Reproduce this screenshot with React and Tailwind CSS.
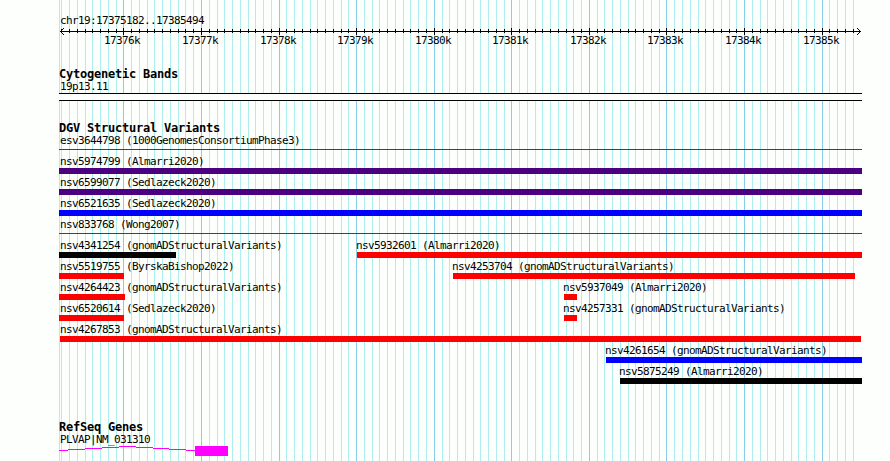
import clsx from "clsx";

const START = 17375182;
const END = 17385494;
const LEFT = 59;
const BASES_PER_MAJOR = 1000;
const BASES_PER_MINOR = 100;

const ROWS = [
  [{ id: "esv3644798", study: "1000GenomesConsortiumPhase3", from: 59, to: 862, type: "complex" }],
  [{ id: "nsv5974799", study: "Almarri2020", from: 59, to: 862, type: "inversion" }],
  [{ id: "nsv6599077", study: "Sedlazeck2020", from: 59, to: 862, type: "inversion" }],
  [{ id: "nsv6521635", study: "Sedlazeck2020", from: 59, to: 862, type: "gain" }],
  [{ id: "nsv833768", study: "Wong2007", from: 59, to: 862, type: "complex" }],
  [
    { id: "nsv4341254", study: "gnomADStructuralVariants", from: 59, to: 176, type: "other" },
    { id: "nsv5932601", study: "Almarri2020", from: 357, to: 862, type: "loss" },
  ],
  [
    { id: "nsv5519755", study: "ByrskaBishop2022", from: 59, to: 124, type: "loss" },
    { id: "nsv4253704", study: "gnomADStructuralVariants", from: 453, to: 855, type: "loss" },
  ],
  [
    { id: "nsv4264423", study: "gnomADStructuralVariants", from: 59, to: 125, type: "loss" },
    { id: "nsv5937049", study: "Almarri2020", from: 564, to: 577, type: "loss" },
  ],
  [
    { id: "nsv6520614", study: "Sedlazeck2020", from: 59, to: 124, type: "loss" },
    { id: "nsv4257331", study: "gnomADStructuralVariants", from: 564, to: 577, type: "loss" },
  ],
  [{ id: "nsv4267853", study: "gnomADStructuralVariants", from: 60, to: 861, type: "loss" }],
  [{ id: "nsv4261654", study: "gnomADStructuralVariants", from: 606, to: 862, type: "gain" }],
  [{ id: "nsv5875249", study: "Almarri2020", from: 620, to: 862, type: "other" }],
];

const BAR_STYLES = {
  complex: "mt-[2px] h-px bg-[#e00000]",
  inversion: "h-[6px] bg-[#4b0082]",
  gain: "h-[6px] bg-[#0000ff]",
  loss: "h-[6px] bg-[#ff0000]",
  other: "h-[6px] bg-black",
};

function toX(base) {
  return Math.round(59.97 + ((base - START) * 800) / (END - START));
}

const ticks = [];
for (
  let base = Math.ceil(START / BASES_PER_MINOR) * BASES_PER_MINOR;
  base <= END;
  base += BASES_PER_MINOR
) {
  ticks.push({ base, x: toX(base), major: base % BASES_PER_MAJOR === 0 });
}

export default function App() {
  return (
    <div className="relative h-[461px] w-[890px] overflow-hidden bg-[#fdfffc] font-['DejaVu_Sans_Mono',monospace] text-black">
      <GridLines />
      <div className="relative flex flex-col">
        <Ruler />
        <CytogeneticTrack />
        <VariantTrack />
        <GeneTrack />
      </div>
    </div>
  );
}

function GridLines() {
  return (
    <svg className="absolute inset-0" width="890" height="461" shapeRendering="crispEdges">
      <rect x={LEFT} y="0" width="1" height="461" fill="#afeeee" />
      {ticks.map(({ base, x, major }) => (
        <rect key={base} x={x} y="0" width="1" height="461" fill={major ? "#87ceeb" : "#afeeee"} />
      ))}
    </svg>
  );
}

function Ruler() {
  return (
    <div className="h-[67px] pt-[15px]">
      <Label className="ml-[60px]">
        chr19:{START}..{END}
      </Label>
      <svg width="890" height="24" className="block" shapeRendering="crispEdges">
        <rect x="60" y="4" width="801" height="1" />
        <path d="M60 4h1v1h-1zM61 3h1v3h-1zM62 2h1v1h-1zM62 6h1v1h-1zM63 1h1v1h-1zM63 7h1v1h-1z" />
        <path d="M860 4h1v1h-1zM859 3h1v3h-1zM858 2h1v1h-1zM858 6h1v1h-1zM857 1h1v1h-1zM857 7h1v1h-1z" />
        {ticks.map(({ base, x, major }) => (
          <rect key={base} x={x} y={major ? 1 : 2} width="1" height={major ? 7 : 4} />
        ))}
        {ticks
          .filter((tick) => tick.major)
          .map(({ base, x }) => (
            <text key={base} x={x - 19} y="17" className="text-[11px] tracking-[-0.622px]">
              {base / 1000}k
            </text>
          ))}
      </svg>
    </div>
  );
}

function CytogeneticTrack() {
  return (
    <div className="h-[54px]">
      <TrackTitle>Cytogenetic Bands</TrackTitle>
      <Label className="ml-[60px]">19p13.11</Label>
      <div className="ml-[59px] h-[8px] w-[803px] border-y border-black bg-[#fdfffc]" />
    </div>
  );
}

function VariantTrack() {
  return (
    <div className="h-[299px]">
      <TrackTitle>DGV Structural Variants</TrackTitle>
      <div className="-mt-[3px]">
        {ROWS.map((row) => (
          <div key={row[0].id} className="flex h-[21px]">
            {row.map((feature, i) => (
              <Feature key={feature.id} feature={feature} after={i > 0 ? row[i - 1].to : 0} />
            ))}
          </div>
        ))}
      </div>
    </div>
  );
}

function Feature({ feature, after }) {
  const { id, study, from, to, type } = feature;

  return (
    <div className="shrink-0" style={{ marginLeft: from - after, width: to - from }}>
      <div className="h-[15px] pt-[3px]">
        <Label className={from === LEFT ? "ml-px" : from === 60 ? "ml-0" : "-ml-px"}>
          {id} ({study})
        </Label>
      </div>
      <div className={BAR_STYLES[type]} />
    </div>
  );
}

function GeneTrack() {
  return (
    <div>
      <TrackTitle>RefSeq Genes</TrackTitle>
      <Label className="ml-[60px]">PLVAP|NM_031310</Label>
      <svg width="890" height="12" className="block" shapeRendering="crispEdges" fill="#ff00ff">
        <path d="M59 4h9v1h-9zM68 3h17v1h-17zM85 2h17v1h-17zM102 1h17v1h-17zM119 0h17v1h-17zM136 1h17v1h-17zM153 2h16v1h-16zM169 3h17v1h-17zM186 4h9v1h-9z" />
        <rect x="195" y="0" width="33" height="10" />
      </svg>
    </div>
  );
}

function TrackTitle({ children }) {
  return (
    <h2 className="ml-[59px] h-[14px] text-[12px] leading-[14px] font-bold tracking-[-0.224px] whitespace-nowrap">
      {children}
    </h2>
  );
}

function Label({ children, className }) {
  return (
    <div
      className={clsx(
        "h-[12px] text-[11px] leading-[12px] tracking-[-0.622px] whitespace-nowrap",
        className
      )}
    >
      {children}
    </div>
  );
}
